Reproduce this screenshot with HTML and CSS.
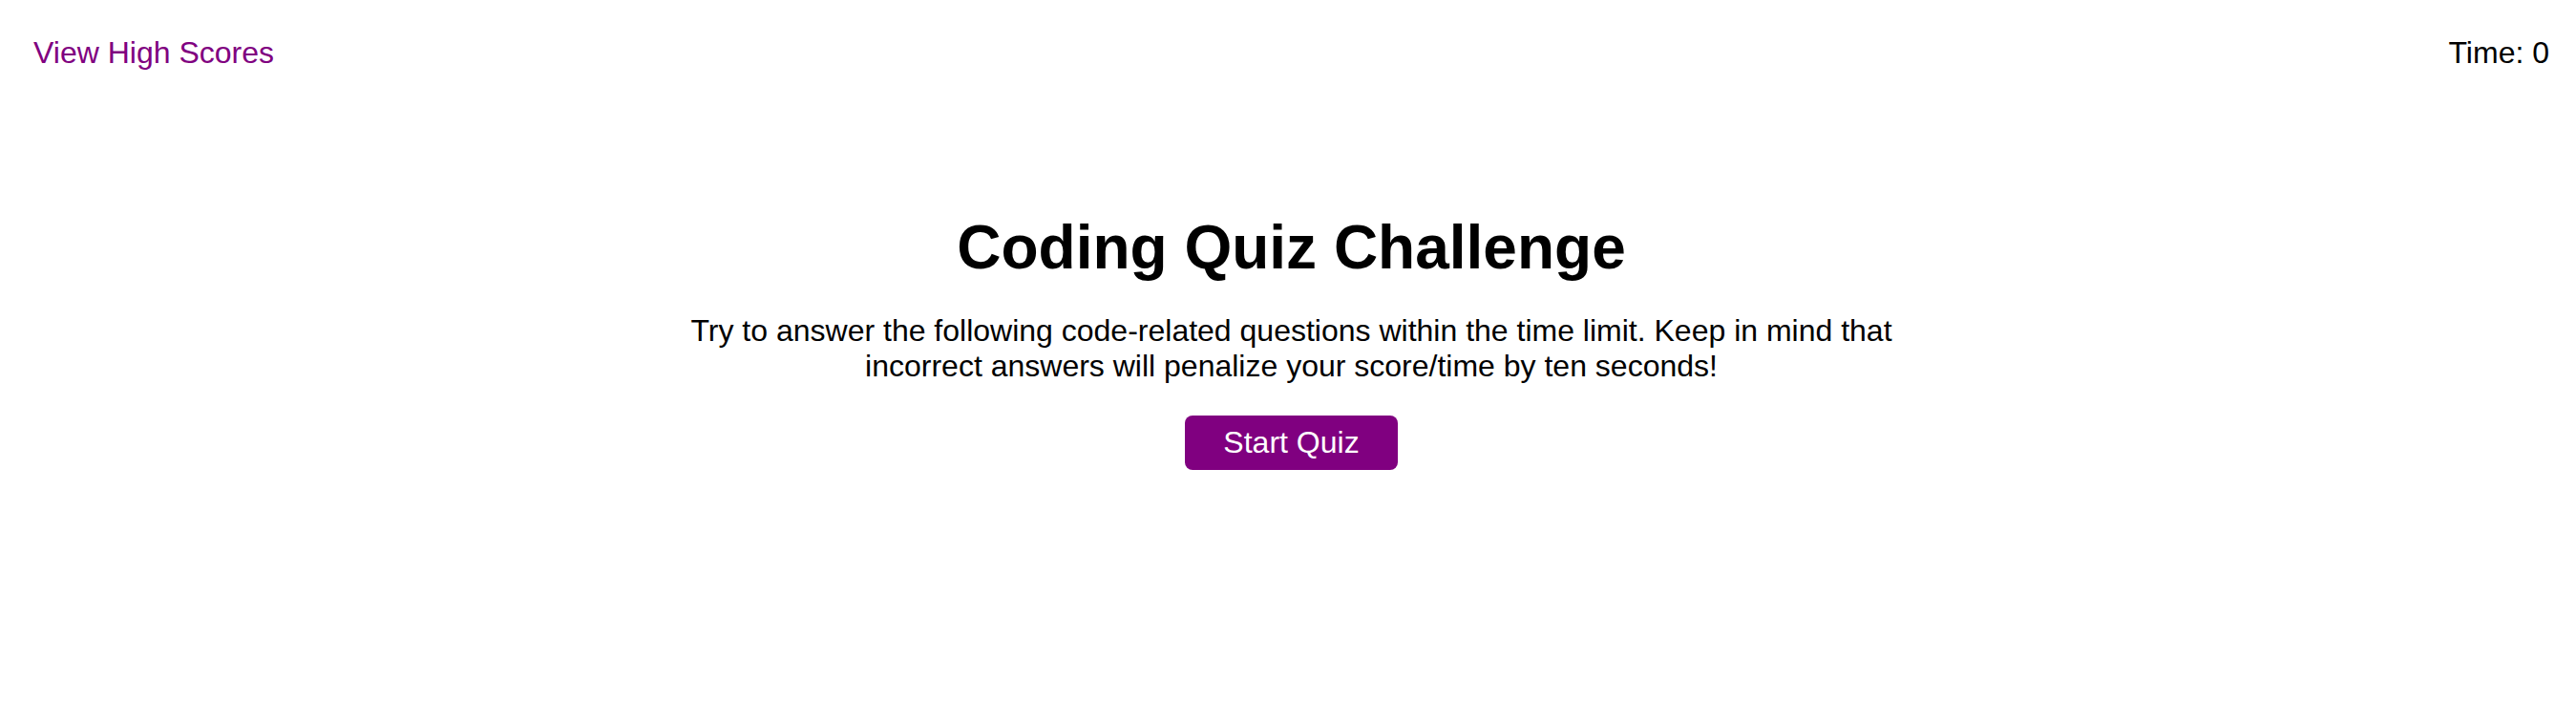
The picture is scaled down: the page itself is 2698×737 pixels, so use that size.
FILE: index.html
```html
<!DOCTYPE html>
<html lang="en">
<head>
<meta charset="utf-8">
<title>Coding Quiz Challenge</title>
<link rel="stylesheet" href="styles.css">
</head>
<body>
<div class="page">
  <header class="topbar">
    <a class="scores-link" href="#">View High Scores</a>
    <div class="timer">Time: <span class="time-value">0</span></div>
  </header>
  <main class="intro">
    <h1 class="intro-title">Coding Quiz Challenge</h1>
    <p class="intro-text">Try to answer the following code-related questions within the time limit. Keep in mind that incorrect answers will penalize your score/time by ten seconds!</p>
    <button class="start-btn" type="button">Start Quiz</button>
  </main>
</div>
</body>
</html>
```
FILE: styles.css
```css
html, body {
  margin: 0;
  padding: 0;
  background: #ffffff;
}

body {
  font-family: "Liberation Sans", Arial, sans-serif;
  font-size: 32px;
  color: #000000;
}

.page {
  padding: 37px 28px 0 35px;
}

.topbar {
  display: flex;
  justify-content: space-between;
  align-items: flex-start;
  line-height: normal;
}

.scores-link {
  color: #800080;
  text-decoration: none;
}

.timer {
  color: #000000;
}

.intro {
  margin-top: 148px;
  display: flex;
  flex-direction: column;
  align-items: center;
  text-align: center;
}

.intro-title {
  margin: 0 0 32px;
  font-size: 64px;
  font-weight: 700;
  line-height: normal;
}

.intro-text {
  margin: 0 0 33px;
  width: 1300px;
  line-height: normal;
}

.start-btn {
  font-family: "Liberation Sans", Arial, sans-serif;
  font-size: 32px;
  line-height: normal;
  color: #ffffff;
  background: #800080;
  border: none;
  border-radius: 8px;
  padding: 10px 40px;
  cursor: pointer;
}
```
